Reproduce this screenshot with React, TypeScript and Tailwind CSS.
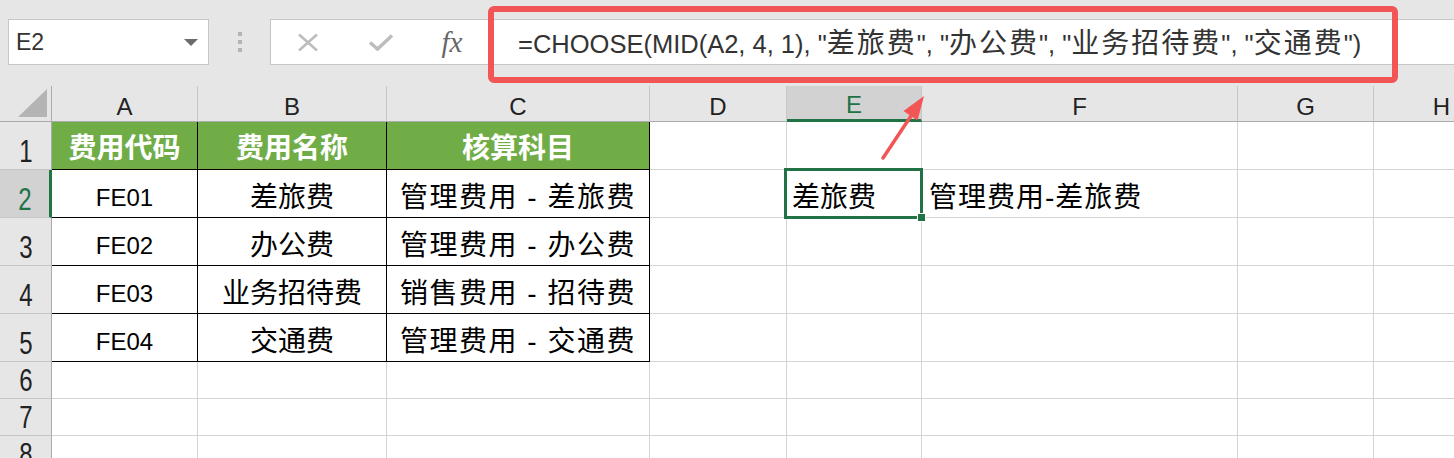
import React from "react";

const cols = [
  { key: "A", w: "w-[146px]" },
  { key: "B", w: "w-[189px]" },
  { key: "C", w: "w-[263px]" },
  { key: "D", w: "w-[137px]" },
  { key: "E", w: "w-[135px]" },
  { key: "F", w: "w-[316px]" },
  { key: "G", w: "w-[136px]" },
  { key: "H", w: "w-[136px]" },
];

const table = [
  ["FE01", "差旅费", "管理费用 - 差旅费"],
  ["FE02", "办公费", "管理费用 - 办公费"],
  ["FE03", "业务招待费", "销售费用 - 招待费"],
  ["FE04", "交通费", "管理费用 - 交通费"],
];

const textSize = ["text-[24px]", "text-[28px]", "text-[28px] tracking-[1.5px]"];

const rowHeights = ["h-[48px]", "h-[48px]", "h-[48px]", "h-[48px]", "h-[48px]", "h-[37px]", "h-[37px]", "h-[37px]"];

function Cjk({ children }: { children: React.ReactNode }) {
  return <span className="text-[28px] tracking-[2px]">{children}</span>;
}

function FormulaBar() {
  return (
    <div className="flex h-[86px] items-start bg-[#e6e6e6] pt-[19px]">
      {/* name box */}
      <div className="ml-[8px] flex h-[46px] w-[201px] shrink-0 items-center justify-between border border-[#c6c6c6] bg-white pl-[7px] pr-[10px]">
        <span className="text-[23px] text-[#333]">E2</span>
        <span className="h-0 w-0 border-x-[7px] border-t-[7px] border-x-transparent border-t-[#6b6b6b]" />
      </div>

      <div className="flex h-[46px] w-[61px] shrink-0 flex-col items-center justify-center gap-[4px]">
        <span className="h-[4px] w-[4px] bg-[#b3b3b3]" />
        <span className="h-[4px] w-[4px] bg-[#b3b3b3]" />
        <span className="h-[4px] w-[4px] bg-[#b3b3b3]" />
      </div>

      {/* formula box */}
      <div className="-mr-px flex h-[46px] flex-1 items-center border border-[#c6c6c6] bg-white">
        <div className="flex w-[74px] shrink-0 justify-center">
          <svg width="22" height="19" viewBox="0 0 22 19">
            <path d="M2 1.5 L20 17.5 M20 1.5 L2 17.5" stroke="#bdbdbd" strokeWidth="2.6" fill="none" />
          </svg>
        </div>
        <div className="flex w-[72px] shrink-0 justify-center">
          <svg width="26" height="17" viewBox="0 0 26 17">
            <path d="M2 8.5 L9.5 15 L24 1.5" stroke="#bdbdbd" strokeWidth="3.6" fill="none" />
          </svg>
        </div>
        <div className="flex w-[70px] shrink-0 justify-center">
          <span className="font-['Liberation_Serif',serif] text-[29px] italic leading-none text-[#666]">fx</span>
        </div>
        <div className="whitespace-nowrap pl-[31px] pt-[4px] text-[25.5px] text-[#333]">
          =CHOOSE(MID(A2, 4, 1), "<Cjk>差旅费</Cjk>", "<Cjk>办公费</Cjk>", "<Cjk>业务招待费</Cjk>", "<Cjk>交通费</Cjk>")
        </div>
      </div>
    </div>
  );
}

function ColumnHeader() {
  return (
    <div className="flex h-[36px] bg-[#e6e6e6]">
      <div className="flex w-[52px] shrink-0 items-end justify-end border-b border-r border-[#ababab] pb-[3px] pr-[3px]">
        <svg width="30" height="29" viewBox="0 0 30 29">
          <polygon points="29,0 29,28 0,28" fill="#b4b4b4" />
        </svg>
      </div>
      {cols.map((c) =>
        c.key === "E" ? (
          <div
            key={c.key}
            className={`${c.w} flex shrink-0 items-center justify-center border-r border-r-[#c6c6c6] border-b-[3px] border-b-[#217346] bg-[#d2d2d2] pt-[4px] text-[24px] leading-none text-[#217346]`}
          >
            {c.key}
          </div>
        ) : (
          <div
            key={c.key}
            className={`${c.w} flex shrink-0 items-center justify-center border-r border-r-[#c6c6c6] border-b border-b-[#ababab] pt-[6px] text-[24px] leading-none text-[#222]`}
          >
            {c.key}
          </div>
        )
      )}
    </div>
  );
}

function RowHeader({ n }: { n: number }) {
  const selected = n === 2;
  return (
    <div
      className={
        selected
          ? "flex w-[52px] shrink-0 items-end justify-center border-b border-b-[#c6c6c6] border-r-[3px] border-r-[#217346] bg-[#d2d2d2] pb-[2px] text-[#217346]"
          : "flex w-[52px] shrink-0 items-end justify-center border-b border-r border-b-[#c6c6c6] border-r-[#ababab] bg-[#e6e6e6] pb-[2px] text-[#222]"
      }
    >
      <span className="inline-block scale-x-75 text-[32px] leading-none">{n}</span>
    </div>
  );
}

function Cell({ row, col }: { row: number; col: number }) {
  const w = cols[col].w;
  const inTable = row <= 5 && col <= 2;

  if (inTable && row === 1) {
    const labels = ["费用代码", "费用名称", "核算科目"];
    return (
      <div className={`${w} flex shrink-0 items-center justify-center border-b border-r border-black bg-[#70ad47] pt-[6px] text-[28px] font-bold text-white`}>
        {labels[col]}
      </div>
    );
  }

  if (inTable) {
    const text = table[row - 2][col];
    return (
      <div
        className={`${w} flex shrink-0 items-center justify-center whitespace-nowrap border-b border-r border-black pt-[8px] text-black ${textSize[col]}`}
      >
        {text}
      </div>
    );
  }

  if (row === 2 && col === 4) {
    return (
      <div className={`${w} relative flex shrink-0 items-center border-b border-r border-[#d4d4d4] pl-[5px] pt-[8px] text-[28px] text-black`}>
        差旅费
        <div className="absolute -left-[3px] -top-[2px] -right-[2px] -bottom-[2px] border-[3px] border-[#217346]" />
        <div className="absolute -bottom-[4px] -right-[4px] h-[7px] w-[7px] bg-[#217346] ring-1 ring-white" />
      </div>
    );
  }

  if (row === 2 && col === 5) {
    return (
      <div className={`${w} flex shrink-0 items-center whitespace-nowrap border-b border-r border-[#d4d4d4] pl-[7px] pt-[8px] text-[28px] tracking-[1px] text-black`}>
        管理费用-差旅费
      </div>
    );
  }

  return <div className={`${w} shrink-0 border-b border-r border-[#d4d4d4]`} />;
}

export default function App() {
  return (
    <div className="relative h-[458px] w-[1454px] overflow-hidden bg-white font-['Liberation_Sans','Noto_Sans_CJK_SC',sans-serif]">
      <FormulaBar />
      <ColumnHeader />
      {rowHeights.map((h, i) => (
        <div key={i} className={`flex ${h}`}>
          <RowHeader n={i + 1} />
          {cols.map((c, j) => (
            <Cell key={c.key} row={i + 1} col={j} />
          ))}
        </div>
      ))}

      {/* annotation: red box around the formula */}
      <div className="absolute left-[488px] top-[6px] h-[77px] w-[910px] rounded-[6px] border-[6px] border-[#f25555]" />

      {/* annotation: arrow pointing from E2 to the formula */}
      <svg className="absolute left-[878px] top-[90px]" width="52" height="72" viewBox="0 0 52 72">
        <line x1="5" y1="68" x2="33" y2="26" stroke="#f25555" strokeWidth="3.5" strokeLinecap="round" />
        <polygon points="46,6 25.5,21 39.5,30.5" fill="#f25555" />
      </svg>
    </div>
  );
}
